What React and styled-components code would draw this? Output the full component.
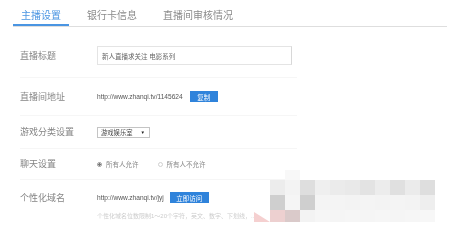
import React from "react";
import styled, { createGlobalStyle } from "styled-components";

const Global = createGlobalStyle`
  html, body { margin: 0; padding: 0; background: #fff; }
  body { font-family: "Liberation Sans", "Noto Sans CJK SC", sans-serif; }
`;

const Page = styled.div`
  position: relative;
  width: 452px;
  height: 230px;
  overflow: hidden;
  background: #fff;
  filter: blur(0.3px);
`;

const Tabs = styled.div`
  display: flex;
  gap: 10px;
  margin-left: 13px;
  width: 434px;
  height: 26px;
  border-bottom: 1px solid #dedede;
  box-sizing: content-box;
`;

const Tab = styled.div`
  padding: 0 8px;
  height: 26px;
  box-sizing: border-box;
  display: flex;
  align-items: center;
  padding-top: 5px;
  font-size: 10px;
  color: ${(p) => (p.$active ? "#4a95e2" : "#8a8a8a")};
  border-bottom: 2px solid ${(p) => (p.$active ? "#4a95e2" : "transparent")};
  margin-bottom: -1px;
  white-space: nowrap;
`;

const Form = styled.div`
  margin-top: 7px;
  margin-left: 20px;
  width: 277px;
  display: flex;
  flex-direction: column;
`;

const Row = styled.div`
  display: flex;
  align-items: ${(p) => (p.$top ? "flex-start" : "center")};
  height: ${(p) => p.$h}px;
  padding-top: ${(p) => p.$pt || 0}px;
  box-sizing: border-box;
  border-bottom: ${(p) => (p.$last ? "none" : "1px solid #f6f6f6")};
`;

const Label = styled.div`
  width: 77px;
  flex: none;
  font-size: 9px;
  color: #858585;
  white-space: nowrap;
  line-height: 12px;
`;

const Field = styled.div`
  display: flex;
  flex-direction: column;
  gap: 8px;
`;

const Line = styled.div`
  display: flex;
  align-items: center;
  gap: ${(p) => p.$gap || 6}px;
`;

const Input = styled.div`
  width: 195px;
  height: 19px;
  box-sizing: border-box;
  border: 1px solid #e4e4e4;
  border-right-color: #d8d8d8;
  padding-left: 4px;
  display: flex;
  align-items: center;
  font-size: 6.5px;
  color: #666;
`;

const Url = styled.span`
  font-size: 6.6px;
  color: #555;
  white-space: nowrap;
`;

const Button = styled.div`
  width: ${(p) => p.$w}px;
  height: 11px;
  background: #2f83db;
  color: #fff;
  font-size: 6.5px;
  display: flex;
  align-items: center;
  justify-content: center;
`;

const Select = styled.div`
  width: 53px;
  height: 11px;
  box-sizing: border-box;
  border: 1px solid #c4c4c4;
  display: flex;
  align-items: center;
  justify-content: space-between;
  padding: 0 4px 0 3px;
  font-size: 6.3px;
  color: #444;
`;

const Arrow = styled.span`
  font-size: 4.5px;
  color: #222;
`;

const Radio = styled.span`
  display: inline-flex;
  align-items: center;
  gap: 4px;
  font-size: 6.5px;
  color: #888;
  margin-right: ${(p) => p.$mr || 0}px;
`;

const Dot = styled.span`
  width: 5px;
  height: 5px;
  border-radius: 50%;
  box-sizing: border-box;
  border: 1px solid ${(p) => (p.$on ? "#999" : "#d0d0d0")};
  background: ${(p) => (p.$on ? "radial-gradient(circle, #777 0 1.2px, #fff 1.4px)" : "#fff")};
`;

const Hint = styled.div`
  font-size: 6px;
  color: #cdcdcd;
  white-space: nowrap;
`;

const Mosaic = styled.div`
  position: absolute;
  left: 270px;
  top: 180px;
  display: grid;
  grid-template-columns: repeat(11, 15px);
  grid-template-rows: 15px 15px 12px;
`;

const Cell = styled.div`
  background: ${(p) => p.$c};
`;

const TopBlock = styled.div`
  position: absolute;
  left: 285px;
  top: 170px;
  width: 15px;
  height: 10px;
  background: #f8f8f8;
`;

const Pink = styled.svg`
  position: absolute;
  left: 254px;
  top: 210px;
`;

const mosaic = [
  ["#ececec", "#f3f3f3", "#dedede", "#efefef", "#ebebeb", "#e9e9e9", "#e3e3e3", "#ececec", "#e0e0e0", "#ebebeb", "#dedede"],
  ["#cfcfcf", "#f5f5f5", "#cfcfcf", "#f4f4f4", "#f4f4f4", "#f3f3f3", "#f4f4f4", "#f3f3f3", "#f4f4f4", "#f3f3f3", "#eeeeee"],
  ["#edd0d0", "#dacaca", "#f3f3f3", "#f6f6f6", "#f5f5f5", "#f6f6f6", "#f5f5f5", "#f6f6f6", "#f5f5f5", "#f6f6f6", "#f7f7f7"],
];

export default function App() {
  return (
    <>
      <Global />
      <Page>
        <Tabs>
          <Tab $active>主播设置</Tab>
          <Tab>银行卡信息</Tab>
          <Tab>直播间审核情况</Tab>
        </Tabs>
        <Form>
          <Row $h={44}>
            <Label>直播标题</Label>
            <Input>新人直播求关注 电影系列</Input>
          </Row>
          <Row $h={38}>
            <Label>直播间地址</Label>
            <Line $gap={7}>
              <Url>http://www.zhanqi.tv/1145624</Url>
              <Button $w={28}>复制</Button>
            </Line>
          </Row>
          <Row $h={33}>
            <Label>游戏分类设置</Label>
            <Select>
              <span>游戏娱乐室</span>
              <Arrow>▼</Arrow>
            </Select>
          </Row>
          <Row $h={31}>
            <Label>聊天设置</Label>
            <Line $gap={0}>
              <Radio $mr={13}>
                <Dot $on />
                所有人允许
              </Radio>
              <Radio>
                <Dot />
                所有人不允许
              </Radio>
            </Line>
          </Row>
          <Row $h={49} $pt={12} $top $last>
            <Label>个性化域名</Label>
            <Field>
              <Line $gap={6}>
                <Url>http://www.zhanqi.tv/jyj</Url>
                <Button $w={39}>立即访问</Button>
              </Line>
              <Hint>个性化域名位数限制1～20个字符，英文、数字、下划线，...</Hint>
            </Field>
          </Row>
        </Form>
        <TopBlock />
        <Mosaic>
          {mosaic.flatMap((row, r) =>
            row.map((c, i) => <Cell key={`${r}-${i}`} $c={c} />)
          )}
        </Mosaic>
        <Pink width="18" height="12" viewBox="0 0 18 12">
          <polygon points="0,2 16,12 0,12" fill="#f5d0d0" />
        </Pink>
      </Page>
    </>
  );
}
